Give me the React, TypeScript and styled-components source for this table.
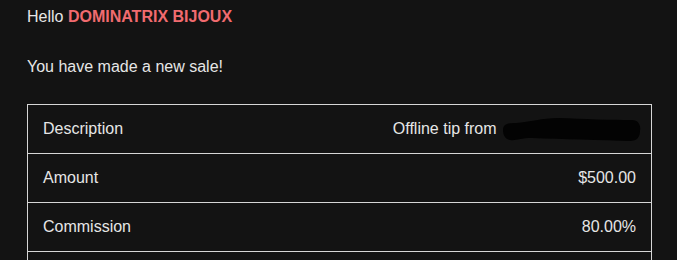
import React, { FC } from 'react';
import styled, { createGlobalStyle } from 'styled-components';

const GlobalStyle = createGlobalStyle`
  html, body {
    margin: 0;
    padding: 0;
    background: #131313;
  }
`;

const Side = styled.div`
  padding: 8px 26px 0 27px;
  font-family: 'Liberation Sans', Arial, sans-serif;
  font-size: 16px;
  line-height: 18px;
  color: #e6e6e6;
`;

const Linje = styled.p<{ $avstand?: number }>`
  margin: ${(p) => p.$avstand ?? 0}px 0 0;
`;

const Navn = styled.strong`
  color: #f16b6f;
  font-weight: 700;
`;

const Tabell = styled.table`
  margin-top: 28px;
  width: 625px;
  border-collapse: collapse;
  border: 1px solid #d6d6d6;
`;

const Celle = styled.td<{ $hoyre?: boolean }>`
  border-top: 1px solid #d6d6d6;
  border-bottom: 1px solid #d6d6d6;
  padding: 15px;
  height: 18px;
  text-align: ${(p) => (p.$hoyre ? 'right' : 'left')};
  white-space: nowrap;
`;

const Sladd = styled.svg`
  display: inline-block;
  vertical-align: middle;
  margin: -6px -5px -6px 1px;
`;

const Overstrek: FC = () => (
  <Sladd width="139" height="26" viewBox="0 0 139 26">
    <path
      d="M1 13 C1 7 6 6 14 6 C28 5 40 1 56 1 C80 2 110 3 130 3 C137 3 139 9 138 14 C138 20 135 24 128 24 C100 23 60 22 30 21 C18 21 14 24 8 23 C3 22 1 18 1 13 Z"
      fill="#030303"
    />
  </Sladd>
);

const rader = [
  { tittel: 'Description', verdi: null },
  { tittel: 'Amount', verdi: '$500.00' },
  { tittel: 'Commission', verdi: '80.00%' },
  { tittel: '', verdi: '' },
];

const App: FC = () => (
  <>
    <GlobalStyle />
    <Side>
      <Linje>
        Hello <Navn>DOMINATRIX BIJOUX</Navn>
      </Linje>
      <Linje $avstand={32}>You have made a new sale!</Linje>
      <Tabell>
        <tbody>
          {rader.map((rad, i) => (
            <tr key={i}>
              <Celle>{rad.tittel}</Celle>
              <Celle $hoyre>
                {rad.verdi ?? (
                  <>
                    Offline tip from <Overstrek />
                  </>
                )}
              </Celle>
            </tr>
          ))}
        </tbody>
      </Tabell>
    </Side>
  </>
);

export default App;
